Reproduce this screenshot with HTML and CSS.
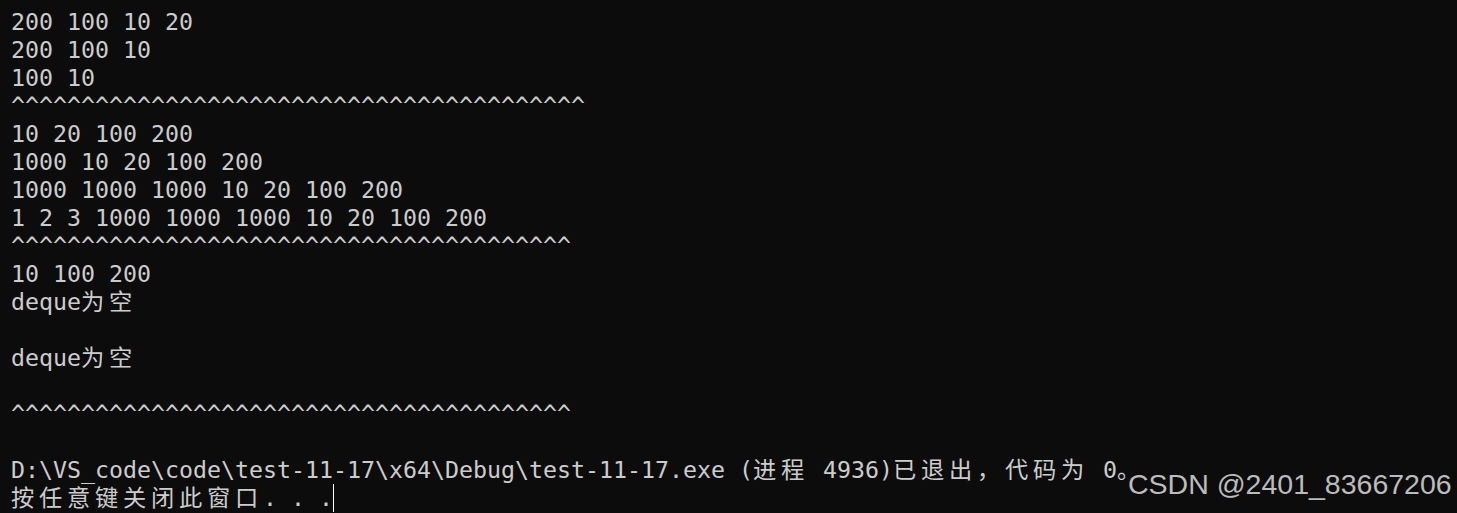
FILE: index.html
```html
<!DOCTYPE html>
<html lang="zh-CN">
<head>
<meta charset="utf-8">
<title>Console</title>
<link rel="stylesheet" href="styles.css">
</head>
<body>
<div class="console">
<div class="line">200 100 10 20</div>
<div class="line">200 100 10</div>
<div class="line">100 10</div>
<div class="line">^^^^^^^^^^^^^^^^^^^^^^^^^^^^^^^^^^^^^^^^^</div>
<div class="line">10 20 100 200</div>
<div class="line">1000 10 20 100 200</div>
<div class="line">1000 1000 1000 10 20 100 200</div>
<div class="line">1 2 3 1000 1000 1000 10 20 100 200</div>
<div class="line">^^^^^^^^^^^^^^^^^^^^^^^^^^^^^^^^^^^^^^^^</div>
<div class="line">10 100 200</div>
<div class="line">deque<span class="w">为空</span></div>
<div class="line"> </div>
<div class="line">deque<span class="w">为空</span></div>
<div class="line"> </div>
<div class="line">^^^^^^^^^^^^^^^^^^^^^^^^^^^^^^^^^^^^^^^^</div>
<div class="line"> </div>
<div class="line">D:\VS_code\code\test-11-17\x64\Debug\test-11-17.exe (<span class="w">进程</span> 4936)<span class="w">已退出，代码为</span> 0<span class="w">。</span></div>
<div class="line"><span class="w">按任意键关闭此窗口</span>. . .<span class="cursor"></span></div>
</div>
<div class="watermark">CSDN @2401_83667206</div>
</body>
</html>
```
FILE: styles.css
```css
html, body {
  margin: 0;
  padding: 0;
}
body {
  background: #0c0c0c;
  width: 1457px;
  height: 513px;
  overflow: hidden;
  position: relative;
}
.console {
  padding: 8px 0 0 11px;
  color: #cccccc;
  font-family: "DejaVu Sans Mono", "Noto Sans CJK SC", monospace;
  font-size: 23.25px;
}
.line {
  height: 28px;
  line-height: 28px;
  white-space: pre;
}
.w {
  font-family: "Noto Sans CJK SC", sans-serif;
  font-size: 23.25px;
  letter-spacing: 4.75px;
  line-height: 1;
}
.cursor {
  display: inline-block;
  width: 1px;
  height: 28px;
  background: #ffffff;
  vertical-align: top;
}
.watermark {
  position: absolute;
  left: 1128px;
  top: 467px;
  font-family: "Liberation Sans", Arial, sans-serif;
  font-size: 28.5px;
  line-height: 34px;
  color: #bcbcbc;
  white-space: nowrap;
}
```
